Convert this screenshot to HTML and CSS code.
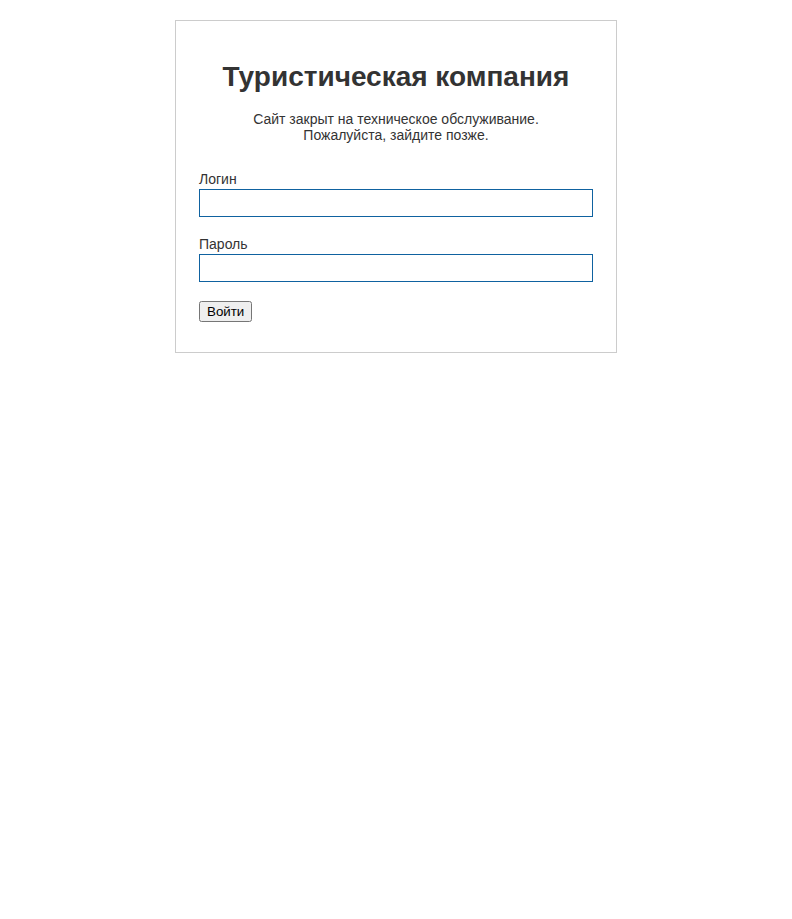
FILE: index.html
```html
<!DOCTYPE html>
<html lang="ru">
<head>
  <meta charset="UTF-8">
  <title>Туристическая компания</title>
  <link rel="stylesheet" href="styles.css">
</head>
<body>
  <div class="maintenance">
    <h1>Туристическая компания</h1>
    <p class="note">Сайт закрыт на техническое обслуживание.<br>Пожалуйста, зайдите позже.</p>

    <form class="login-form" onsubmit="return false;">
      <div class="field">
        <label for="login">Логин</label>
        <input type="text" id="login" name="login">
      </div>
      <div class="field">
        <label for="password">Пароль</label>
        <input type="password" id="password" name="password">
      </div>
      <div class="actions">
        <button type="submit">Войти</button>
      </div>
    </form>
  </div>
</body>
</html>
```

FILE: styles.css
```css
body {
  margin: 0;
  padding: 20px 0;
  font-family: "Liberation Sans", Arial, sans-serif;
  font-size: 14px;
  color: #333;
  background: #fff;
}

.maintenance {
  width: 394px;
  margin: 0 auto;
  padding: 23px 23px 30px;
  border: 1px solid #ccc;
}

h1 {
  font-size: 28px;
  margin: 17px 0 18px;
  text-align: center;
  color: #333;
}

.note {
  margin: 0 0 28px;
  text-align: center;
}

.field {
  margin-bottom: 19px;
}

.field label {
  display: block;
  margin-bottom: 2px;
}

.field input {
  display: block;
  box-sizing: border-box;
  width: 100%;
  height: 28px;
  margin: 0;
  padding: 4px 6px;
  border: 1px solid #0f62a0;
  font-family: inherit;
  font-size: 14px;
}

.actions button {
  font-family: "Liberation Sans", Arial, sans-serif;
  font-size: 13.33px;
  margin: 0;
}
```
